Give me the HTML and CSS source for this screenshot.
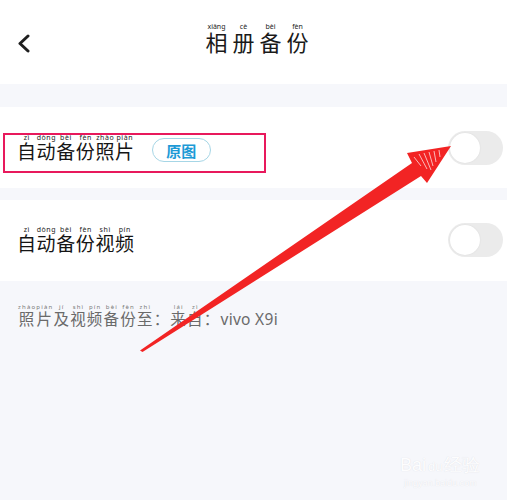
FILE: index.html
```html
<!DOCTYPE html>
<html lang="zh">
<head>
<meta charset="utf-8">
<link rel="stylesheet" href="styles.css">
</head>
<body>
<div class="page">
  <header class="topbar">
    <svg class="back" width="14" height="20" viewBox="0 0 14 20"><polyline points="11,2 3,9.5 11,17" fill="none" stroke="#1f1f1f" stroke-width="3" stroke-linecap="round" stroke-linejoin="round"/></svg>
    <h1 class="title"><ruby>相<rt>xiǎng</rt></ruby><ruby>册<rt>cè</rt></ruby><ruby>备<rt>bèi</rt></ruby><ruby>份<rt>fèn</rt></ruby></h1>
  </header>
  <div class="band"></div>
  <section class="row row-first">
    <div class="mark">
      <span class="label"><ruby>自<rt>zì</rt></ruby><ruby>动<rt>dòng</rt></ruby><ruby>备<rt>bèi</rt></ruby><ruby>份<rt>fèn</rt></ruby><ruby>照<rt>zhào</rt></ruby><ruby>片<rt>piàn</rt></ruby></span>
      <span class="badge">原图</span>
    </div>
    <div class="toggle"><span class="knob"></span></div>
  </section>
  <div class="band small"></div>
  <section class="row row-second">
    <span class="label"><ruby>自<rt>zì</rt></ruby><ruby>动<rt>dòng</rt></ruby><ruby>备<rt>bèi</rt></ruby><ruby>份<rt>fèn</rt></ruby><ruby>视<rt>shì</rt></ruby><ruby>频<rt>pín</rt></ruby></span>
    <div class="toggle"><span class="knob"></span></div>
  </section>
  <p class="note"><ruby>照<rt>zhào</rt></ruby><ruby>片<rt>piàn</rt></ruby><ruby>及<rt>jí</rt></ruby><ruby>视<rt>shì</rt></ruby><ruby>频<rt>pín</rt></ruby><ruby>备<rt>bèi</rt></ruby><ruby>份<rt>fèn</rt></ruby><ruby>至<rt>zhì</rt></ruby>：<ruby>来<rt>lái</rt></ruby><ruby>自<rt>zì</rt></ruby>：<span class="latin">vivo X9i</span></p>
</div>
<svg class="arrow" width="507" height="500" viewBox="0 0 507 500">
  <polygon points="140,350.5 412,163 407,153 451,146 427,183 421,176 142.5,352" fill="#f22424"/>
  <g stroke="#ffffff" stroke-width="0.8" opacity="0.85">
    <line x1="414" y1="157" x2="421" y2="166"/>
    <line x1="419" y1="154" x2="427" y2="169"/>
    <line x1="424" y1="153" x2="431" y2="170"/>
    <line x1="429" y1="152" x2="433" y2="166"/>
    <line x1="434" y1="151" x2="436" y2="162"/>
    <line x1="439" y1="150" x2="440" y2="157"/>
  </g>
</svg>
<div class="watermark"><span class="wm-brand">Bai<span class="paw">du</span>经验</span><span class="wm-url">jingyan.baidu.com</span></div>
</body>
</html>
```

FILE: styles.css
```css
html, body {
  margin: 0;
  padding: 0;
}
body {
  width: 507px;
  height: 500px;
  background: #f6f7fb;
  font-family: "Noto Sans CJK SC", "Noto Sans", sans-serif;
  color: #1a1a1a;
  position: relative;
  overflow: hidden;
}
.page {
  display: flex;
  flex-direction: column;
}
ruby {
  ruby-position: over;
}
rt {
  font-family: "Noto Sans", "DejaVu Sans", sans-serif;
  font-size: 7px;
  line-height: 1;
  color: #222;
}
.topbar {
  height: 84px;
  background: #fff;
  display: flex;
  align-items: center;
  position: relative;
}
.back {
  margin-left: 17px;
  margin-top: 4px;
}
.title {
  margin: 0;
  font-size: 22px;
  font-weight: 400;
  position: absolute;
  left: 0;
  right: 0;
  top: 23px;
  padding-left: 7px;
  text-align: center;
  line-height: 30px;
}
.title ruby {
  margin: 0 2.5px;
}
.band {
  height: 23px;
}
.band.small {
  height: 12px;
}
.row {
  height: 81px;
  background: #fff;
  display: flex;
  justify-content: space-between;
  align-items: flex-start;
  box-sizing: border-box;
}
.mark {
  margin-left: 3px;
  margin-top: 26px;
  width: 263px;
  height: 40px;
  box-sizing: border-box;
  border: 2px solid #e8195c;
  display: flex;
  align-items: center;
  padding-left: 12px;
}
.label {
  font-size: 19px;
  line-height: 24px;
  letter-spacing: 0.6px;
  color: #151515;
}
.row-first .label {
  margin-top: -9px;
}
.badge {
  margin-left: 17px;
  width: 59px;
  height: 24px;
  box-sizing: border-box;
  border: 1px solid #a6d6e6;
  border-radius: 12px;
  color: #1d9ad6;
  font-size: 15px;
  font-weight: 700;
  display: flex;
  align-items: center;
  justify-content: center;
  margin-top: -6px;
}
.toggle {
  width: 55px;
  height: 34px;
  border-radius: 17px;
  background: #ebebeb;
  margin-right: 4px;
  margin-top: 24px;
  position: relative;
}
.knob {
  position: absolute;
  left: 2px;
  top: 2px;
  width: 30px;
  height: 30px;
  border-radius: 50%;
  background: #fff;
  box-shadow: 0 0 2px rgba(0,0,0,0.08);
}
.row-second {
  padding-left: 17px;
}
.row-second .label {
  margin-top: 26px;
}
.row-second .toggle {
  margin-top: 23px;
}
.note {
  margin: 23px 0 0 18px;
  font-size: 15.5px;
  line-height: 24px;
  color: #6a6a6a;
  letter-spacing: 1.2px;
}
.note rt {
  color: #777;
  font-size: 6px;
}
.latin {
  font-family: "Noto Sans", sans-serif;
  letter-spacing: 0.3px;
}
.arrow {
  position: absolute;
  left: 0;
  top: 0;
  pointer-events: none;
}
.watermark {
  position: absolute;
  left: 400px;
  top: 455px;
  display: flex;
  flex-direction: column;
  align-items: flex-start;
  color: #fdfdfe;
  text-shadow: 0 0 1px #d9dae0;
}
.wm-brand {
  font-family: "Liberation Sans", sans-serif;
  font-size: 18px;
  line-height: 20px;
}
.paw {
  font-size: 13px;
  margin: 0 2px;
}
.wm-url {
  font-family: "Liberation Sans", sans-serif;
  font-size: 9px;
  line-height: 12px;
  margin-left: 4px;
}
```
